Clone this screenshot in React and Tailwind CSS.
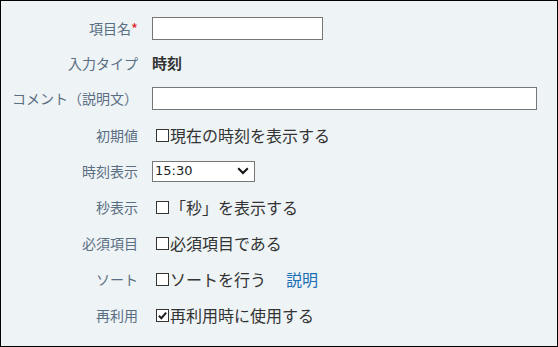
import React from "react";

const font = { fontFamily: '"Noto Sans CJK JP", "Noto Sans", sans-serif' };

function Box({ checked }) {
  return (
    <span className="inline-flex items-center justify-center w-[13px] h-[13px] border border-[#333] bg-white ml-[4px] mr-[1px] shrink-0">
      {checked && (
        <svg viewBox="0 0 12 12" className="w-[11px] h-[11px]">
          <path d="M2 6.2 L4.8 9 L10 2.8" fill="none" stroke="#222" strokeWidth="2.2" />
        </svg>
      )}
    </span>
  );
}

function Row({ label, h, children, req }) {
  return (
    <div className={`flex items-center ${h}`}>
      <div className="w-[137px] text-right text-[14px] text-[#5a6e82] shrink-0 whitespace-nowrap">
        {label}
        {req && <span className="relative top-[1px] text-[#e0201c] text-[15px] leading-none">*</span>}
      </div>
      <div className="pl-[14px] flex items-center text-[16px] text-[#333]">{children}</div>
    </div>
  );
}

export default function App() {
  return (
    <div
      className="w-[558px] h-[347px] border border-black bg-[#eef3f6] pt-[9px] overflow-hidden"
      style={font}
    >
      <Row label="項目名" h="h-[36px]" req>
        <input className="w-[171px] h-[23px] border border-[#767676] bg-white" />
      </Row>
      <Row label="入力タイプ" h="h-[34px]">
        <span className="font-bold text-[15px]">時刻</span>
      </Row>
      <Row label="コメント（説明文）" h="h-[37px]">
        <input className="w-[385px] h-[23px] border border-[#767676] bg-white" />
      </Row>
      <Row label="初期値" h="h-[36px]">
        <Box />
        現在の時刻を表示する
      </Row>
      <Row label="時刻表示" h="h-[36px]">
        <div className="w-[103px] h-[21px] border border-[#767676] bg-white flex items-center justify-between pl-[2px] pr-[5px]">
          <span className="text-[13px] text-[#222]" style={{ fontFamily: '"DejaVu Sans", sans-serif' }}>15:30</span>
          <svg viewBox="0 0 12 8" className="w-[12px] h-[8px]">
            <path d="M1.2 1.2 L6 6 L10.8 1.2" fill="none" stroke="#111" strokeWidth="2" />
          </svg>
        </div>
      </Row>
      <Row label="秒表示" h="h-[36px]">
        <Box />
        「秒」を表示する
      </Row>
      <Row label="必須項目" h="h-[36px]">
        <Box />
        必須項目である
      </Row>
      <Row label="ソート" h="h-[36px]">
        <Box />
        ソートを行う
        <a className="ml-[20px] text-[#1a6eb3]">説明</a>
      </Row>
      <Row label="再利用" h="h-[36px]">
        <Box checked />
        再利用時に使用する
      </Row>
    </div>
  );
}
